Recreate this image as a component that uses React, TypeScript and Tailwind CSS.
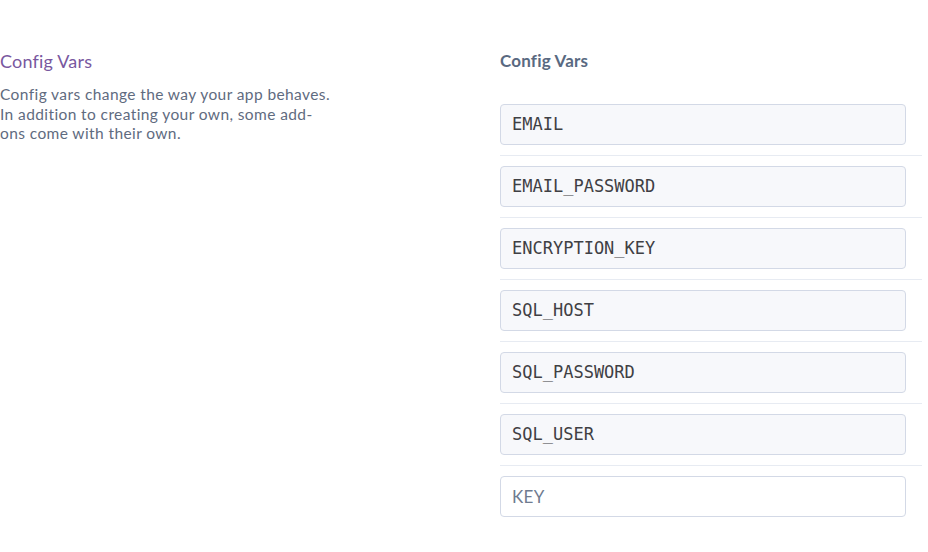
import React from "react";

const vars = ["EMAIL", "EMAIL_PASSWORD", "ENCRYPTION_KEY", "SQL_HOST", "SQL_PASSWORD", "SQL_USER"];

export default function App() {
  return (
    <div className="w-[928px] h-[552px] bg-white flex pt-[49px]" style={{ fontFamily: "Lato, 'Open Sans', sans-serif" }}>
      <div className="w-[500px] shrink-0">
        <h2 className="text-[18px] leading-[24px] tracking-[0.2px] text-[#79589f]">Config Vars</h2>
        <p className="mt-[12px] w-[334px] text-[15.5px] leading-[19.5px] tracking-[0.4px] text-[#5f6b80]">
          Config vars change the way your app behaves. In addition to creating your own, some add-ons come with their own.
        </p>
      </div>
      <div className="w-[422px]">
        <h3 className="text-[17px] leading-[24px] tracking-[0.2px] font-bold text-[#596981]">Config Vars</h3>
        <div className="mt-[31px] flex flex-col">
          {vars.map((v) => (
            <div key={v} className="flex flex-col">
              <div className="w-[406px] h-[41px] rounded-[4px] border border-[#d3d9e6] bg-[#f7f8fb] flex items-center pl-[11px] text-[17px] text-[#3f4044]" style={{ fontFamily: "'DejaVu Sans Mono', monospace" }}>
                {v}
              </div>
              <div className="my-[10px] h-px bg-[#e7ebf2]" />
            </div>
          ))}
          <div className="w-[406px] h-[41px] rounded-[4px] border border-[#d3d9e6] bg-white flex items-center pl-[11px] text-[17px] tracking-[0.3px] text-[#6f7b90]">
            KEY
          </div>
        </div>
      </div>
    </div>
  );
}
